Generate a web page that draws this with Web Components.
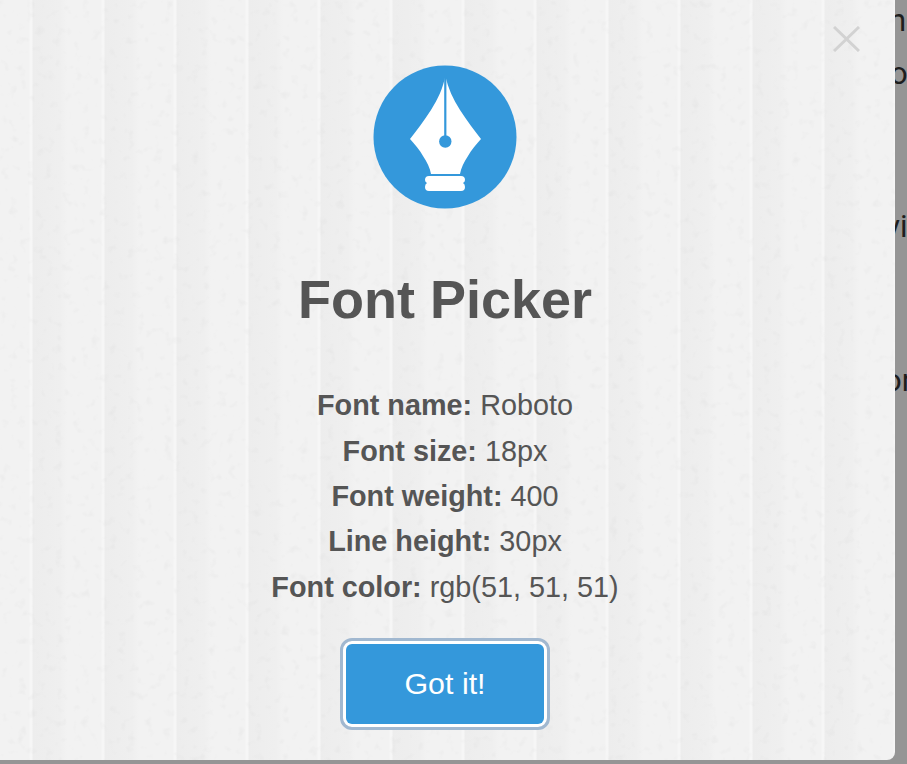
<!DOCTYPE html>
<html>
<head>
<meta charset="utf-8">
<style>
    html, body { margin: 0; height: 100%; overflow: hidden; background: #959595; }
    body { font-family: "Liberation Sans", Arial, sans-serif; }
</style>
</head>
<body>
<font-page>
    <font-modal>
        <pen-logo></pen-logo>
        <h1 slot="title">Font Picker</h1>
        <font-row label="Font name:">Roboto</font-row>
        <font-row label="Font size:">18px</font-row>
        <font-row label="Font weight:">400</font-row>
        <font-row label="Line height:">30px</font-row>
        <font-row label="Font color:">rgb(51, 51, 51)</font-row>
    </font-modal>
    <page-edge>
        <span style="margin:-5px 0 0 -6px">n</span>
        <span style="margin:1px 0 0 -5px">o</span>
        <span style="margin:101px 0 0 -10px">vi</span>
        <span style="margin:102px 0 0 -11px">or</span>
    </page-edge>
</font-page>
<script>
class FontPage extends HTMLElement {
    constructor() {
        super();
        const shadow = this.attachShadow({mode: "open"});
        shadow.innerHTML = `
            <style>
                :host {
                    display: flex;
                    align-items: flex-start;
                    width: 907px;
                    height: 764px;
                    overflow: hidden;
                    background: #959595;
                }
            </style>
            <slot></slot>
        `;
    }
}
customElements.define("font-page", FontPage);

class PageEdge extends HTMLElement {
    constructor() {
        super();
        const shadow = this.attachShadow({mode: "open"});
        shadow.innerHTML = `
            <style>
                :host {
                    display: flex;
                    flex-direction: column;
                    flex: 1;
                    height: 764px;
                    overflow: hidden;
                    color: #1e1e1e;
                    font: 31px/52px Roboto, sans-serif;
                }
                ::slotted(span) { display: block; white-space: nowrap; }
            </style>
            <slot></slot>
        `;
    }
}
customElements.define("page-edge", PageEdge);

class FontModal extends HTMLElement {
    constructor() {
        super();
        const shadow = this.attachShadow({mode: "open"});
        shadow.innerHTML = `
            <style>
                :host {
                    position: relative;
                    display: flex;
                    flex-direction: column;
                    align-items: center;
                    box-sizing: border-box;
                    flex: none;
                    width: 895px;
                    height: 760px;
                    padding: 65px 5px 0 0;
                    overflow: hidden;
                    border-radius: 0 0 8px 0;
                    color: #555;
                    background: repeating-linear-gradient(90deg,
                        #f2f2f2 0, #f2f2f2 29px,
                        #f6f6f6 30px, #f6f6f6 32px,
                        #ededed 33px, #efefef 60px,
                        #f2f2f2 67px, #f2f2f2 72px);
                }
                .noise {
                    position: absolute;
                    inset: 0;
                    width: 100%;
                    height: 100%;
                    opacity: .22;
                }
                .close {
                    position: absolute;
                    top: 26px;
                    left: 833px;
                    width: 27px;
                    height: 26px;
                }
                .body {
                    position: relative;
                    display: flex;
                    flex-direction: column;
                    align-items: center;
                }
                ::slotted(h1) {
                    margin: 56px 0 50.4px;
                    font-size: 54px;
                    line-height: 68px;
                    font-weight: 700;
                    color: #555;
                }
                .lines {
                    display: flex;
                    flex-direction: column;
                }
                button {
                    box-sizing: border-box;
                    width: 198px;
                    height: 80px;
                    margin-top: 34px;
                    border: 0;
                    border-radius: 6px;
                    background: #3498db;
                    color: #fff;
                    font: 30.4px "Liberation Sans", Arial, sans-serif;
                    outline: 3px solid #a1b8d0;
                    box-shadow: 0 0 0 3px #fff;
                    outline-offset: 3px;
                }
            </style>
            <svg class="noise" aria-hidden="true">
                <filter id="n" x="0" y="0" width="100%" height="100%">
                    <feTurbulence type="fractalNoise" baseFrequency="0.11" numOctaves="2" seed="4"/>
                    <feColorMatrix values="0 0 0 0 0.6  0 0 0 0 0.6  0 0 0 0 0.6  2.4 0 0 0 -1.4"/>
                </filter>
                <rect width="100%" height="100%" filter="url(#n)"/>
            </svg>
            <svg class="close" viewBox="0 0 27 26" aria-hidden="true">
                <path d="M1 1 L26 25 M26 1 L1 25" stroke="#d2d2d2" stroke-width="3" fill="none"/>
            </svg>
            <div class="body">
                <slot name="logo"></slot>
                <slot name="title"></slot>
                <div class="lines"><slot></slot></div>
                <button>Got it!</button>
            </div>
        `;
    }
    connectedCallback() {
        const logo = this.querySelector("pen-logo");
        if (logo) logo.slot = "logo";
    }
}
customElements.define("font-modal", FontModal);

class PenLogo extends HTMLElement {
    constructor() {
        super();
        const shadow = this.attachShadow({mode: "open"});
        shadow.innerHTML = `
            <style>
                :host { display: block; width: 144px; height: 144px; }
                svg { display: block; }
            </style>
            <svg width="144" height="144" viewBox="0 0 144 144">
                <circle cx="72" cy="72" r="71.5" fill="#3498db"/>
                <path fill="#fff" d="M72.3 11 C70 23 65 34 58 45 C51 56 43 66 37 74 C42 80 47 85 50 91 C54 97 57 103 58 109 L87 109 C88 103 91 97 95 91 C98 85 103 80 108 74 C102 66 94 56 87 45 C80 34 75 23 72.3 11 Z"/>
                <rect x="71.2" y="10" width="2.2" height="66" fill="#3498db"/>
                <circle cx="72.3" cy="76.5" r="6.2" fill="#3498db"/>
                <path fill="#fff" d="M56 111 L88 111 Q92 111 92 115 Q92 117 90 118 Q92 119 92 122 Q92 126 88 126 L56 126 Q52 126 52 122 Q52 119 54 118 Q52 117 52 115 Q52 111 56 111 Z"/>
            </svg>
        `;
    }
}
customElements.define("pen-logo", PenLogo);

class FontRow extends HTMLElement {
    constructor() {
        super();
        const shadow = this.attachShadow({mode: "open"});
        shadow.innerHTML = `
            <style>
                :host {
                    display: block;
                    height: 45.3px;
                    line-height: 45.3px;
                    text-align: center;
                    font-size: 28.8px;
                    color: #555;
                }
                b { font-weight: 700; }
            </style>
            <b></b> <slot></slot>
        `;
        shadow.querySelector("b").textContent = this.getAttribute("label");
    }
}
customElements.define("font-row", FontRow);
</script>
</body>
</html>
